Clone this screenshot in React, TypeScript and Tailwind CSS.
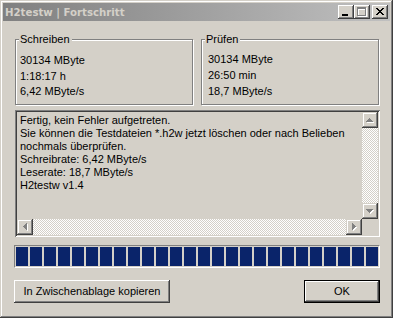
import React from "react";

type R = [number, number, number, number];

function Glyph({ rects, w, h, color, shadow }: { rects: R[]; w: number; h: number; color: string; shadow?: boolean }) {
  return (
    <svg width={w + 1} height={h + 1} viewBox={`0 0 ${w + 1} ${h + 1}`} shapeRendering="crispEdges" className="block">
      {shadow && rects.map(([x, y, rw, rh], i) => <rect key={"s" + i} x={x + 1} y={y + 1} width={rw} height={rh} fill="#ffffff" />)}
      {rects.map(([x, y, rw, rh], i) => <rect key={i} x={x} y={y} width={rw} height={rh} fill={color} />)}
    </svg>
  );
}

const UP: R[] = [[3, 0, 1, 1], [2, 1, 3, 1], [1, 2, 5, 1], [0, 3, 7, 1]];
const DOWN: R[] = [[0, 0, 7, 1], [1, 1, 5, 1], [2, 2, 3, 1], [3, 3, 1, 1]];
const LEFT: R[] = [[0, 3, 1, 1], [1, 2, 1, 3], [2, 1, 1, 5], [3, 0, 1, 7]];
const RIGHT: R[] = [[0, 0, 1, 7], [1, 1, 1, 5], [2, 2, 1, 3], [3, 3, 1, 1]];
const CLOSE: R[] = [
  [0, 0, 2, 1], [6, 0, 2, 1],
  [1, 1, 2, 1], [5, 1, 2, 1],
  [2, 2, 4, 1],
  [3, 3, 2, 1],
  [2, 4, 4, 1],
  [1, 5, 2, 1], [5, 5, 2, 1],
  [0, 6, 2, 1], [6, 6, 2, 1],
];
const MAX: R[] = [[0, 0, 9, 2], [0, 2, 1, 7], [8, 2, 1, 7], [0, 8, 9, 1]];
const MIN: R[] = [[0, 0, 6, 2]];

function ScrollBtn({ children }: { children: React.ReactNode }) {
  return (
    <div className="w-[16px] h-[16px] shrink-0 flex items-center justify-center bg-[#d4d0c8] shadow-[inset_-1px_-1px_0_#404040,inset_1px_1px_0_#d4d0c8,inset_-2px_-2px_0_#808080,inset_2px_2px_0_#ffffff]">
      {children}
    </div>
  );
}

function Track() {
  return <div className="flex-1 bg-[repeating-conic-gradient(#ffffff_0%_25%,#d4d0c8_0%_50%)] bg-[length:2px_2px]" />;
}

function Group({ label, lines, pad }: { label: string; lines: string[]; pad: string }) {
  return (
    <div className="relative w-[178px] h-[66px] border border-[#808080] shadow-[1px_1px_0_#ffffff,inset_1px_1px_0_#ffffff]">
      <span className="absolute -top-[7px] left-[3px] bg-[#d4d0c8] pl-[1px] pr-[2px] leading-[13px]">{label}</span>
      <div className={pad}>
        {lines.map((l) => (
          <div key={l}>{l}</div>
        ))}
      </div>
    </div>
  );
}

function CapBtn({ children }: { children: React.ReactNode }) {
  return (
    <div className="w-[16px] h-[14px] flex items-center justify-center bg-[#d4d0c8] shadow-[inset_-1px_-1px_0_#404040,inset_1px_1px_0_#ffffff,inset_-2px_-2px_0_#808080,inset_2px_2px_0_#d4d0c8]">
      {children}
    </div>
  );
}

export default function App() {
  const text = [
    "Fertig, kein Fehler aufgetreten.",
    "Sie können die Testdateien *.h2w jetzt löschen oder nach Belieben",
    "nochmals überprüfen.",
    "Schreibrate: 6,42 MByte/s",
    "Leserate: 18,7 MByte/s",
    "H2testw v1.4",
  ];
  return (
    <div className="w-[393px] h-[318px] p-[3px] bg-[#d4d0c8] text-[11px] text-black font-['Liberation_Sans',Arial,sans-serif] shadow-[inset_-1px_-1px_0_#404040,inset_1px_1px_0_#d4d0c8,inset_-2px_-2px_0_#808080,inset_2px_2px_0_#ffffff] overflow-hidden">
      {/* title bar */}
      <div className="h-[18px] flex items-center justify-between bg-gradient-to-r from-[#808080] to-[#c0c0c0] pl-[2px] pr-[2px]">
        <span className="font-bold text-[10.2px] font-['DejaVu_Sans',sans-serif] text-[#d4d0c8] leading-[13px]">H2testw | Fortschritt</span>
        <div className="flex items-center">
          <CapBtn>
            <div className="pt-[6px] pr-[1px]">
              <Glyph rects={MIN} w={6} h={2} color="#000000" />
            </div>
          </CapBtn>
          <CapBtn>
            <Glyph rects={MAX} w={9} h={9} color="#808080" shadow />
          </CapBtn>
          <div className="w-[2px]" />
          <CapBtn>
            <div className="pl-[1px]">
              <Glyph rects={CLOSE} w={8} h={7} color="#000000" />
            </div>
          </CapBtn>
        </div>
      </div>

      {/* group boxes */}
      <div className="flex gap-[8px] ml-[12px] mt-[18px]">
        <Group label="Schreiben" lines={["30134 MByte", "1:18:17 h", "6,42 MByte/s"]} pad="flex flex-col pl-[4px] pt-[13px] leading-[15.5px]" />
        <Group label="Prüfen" lines={["30134 MByte", "26:50 min", "18,7 MByte/s"]} pad="flex flex-col pl-[6px] pt-[11px] leading-[16px]" />
      </div>

      {/* text area */}
      <div className="ml-[12px] mt-[5px] w-[365px] h-[127px] p-[2px] flex flex-col shadow-[inset_1px_1px_0_#808080,inset_-1px_-1px_0_#ffffff,inset_2px_2px_0_#404040,inset_-2px_-2px_0_#d4d0c8]">
        <div className="flex h-[107px]">
          <div className="flex-1 pl-[3px] pt-[2px] leading-[13px] whitespace-nowrap overflow-hidden">
            {text.map((t) => (
              <div key={t}>{t}</div>
            ))}
          </div>
          <div className="w-[16px] flex flex-col">
            <ScrollBtn>
              <Glyph rects={UP} w={7} h={4} color="#808080" shadow />
            </ScrollBtn>
            <Track />
            <ScrollBtn>
              <Glyph rects={DOWN} w={7} h={4} color="#808080" shadow />
            </ScrollBtn>
          </div>
        </div>
        <div className="flex h-[16px]">
          <div className="flex-1 flex">
            <ScrollBtn>
              <Glyph rects={LEFT} w={4} h={7} color="#808080" shadow />
            </ScrollBtn>
            <Track />
            <ScrollBtn>
              <Glyph rects={RIGHT} w={4} h={7} color="#808080" shadow />
            </ScrollBtn>
          </div>
          <div className="w-[16px] bg-[#d4d0c8]" />
        </div>
      </div>

      {/* progress bar */}
      <div className="ml-[11px] mt-[8px] w-[366px] h-[23px] border border-t-[#808080] border-l-[#808080] border-b-white border-r-white p-[1px] flex gap-[2px]">
        {Array.from({ length: 26 }).map((_, i) => (
          <div key={i} className="w-[12px] h-full bg-[#0a246a]" />
        ))}
      </div>

      {/* buttons */}
      <div className="ml-[11px] mt-[12px] w-[366px] flex justify-between">
        <button className="w-[156px] h-[23px] flex items-center justify-center bg-[#d4d0c8] shadow-[inset_-1px_-1px_0_#404040,inset_1px_1px_0_#ffffff,inset_-2px_-2px_0_#808080,inset_2px_2px_0_#d4d0c8]">
          In Zwischenablage kopieren
        </button>
        <button className="w-[76px] h-[23px] flex items-center justify-center border border-black bg-[#d4d0c8] shadow-[inset_-1px_-1px_0_#404040,inset_1px_1px_0_#ffffff,inset_-2px_-2px_0_#808080,inset_2px_2px_0_#d4d0c8]">
          OK
        </button>
      </div>
    </div>
  );
}
